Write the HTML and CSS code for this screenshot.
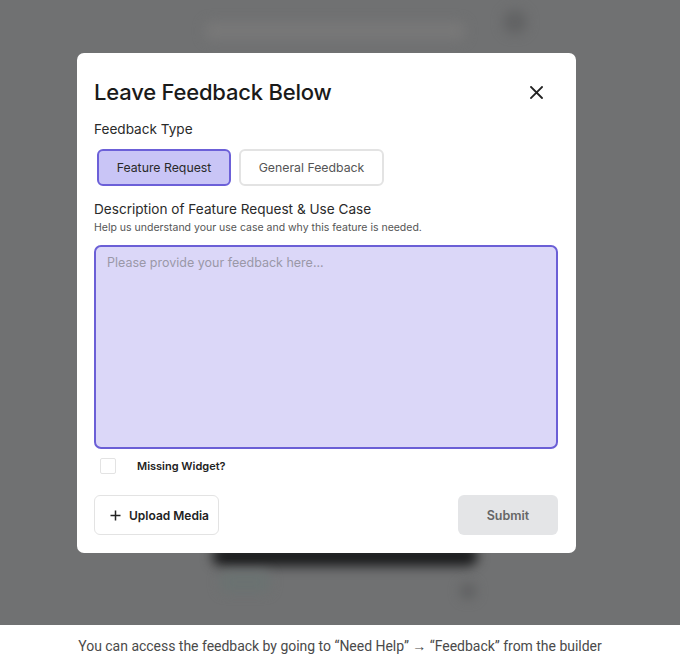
FILE: index.html
```html
<!DOCTYPE html>
<html>
<head>
<meta charset="utf-8">
<link rel="stylesheet" href="styles.css">
</head>
<body>
<div class="stage">
  <div class="blur blur-top"></div>
  <div class="blur blur-dot"></div>
  <div class="blur blur-shadow"></div>
  <div class="blur blur-teal"></div>
  <div class="blur blur-dot2"></div>
  <div class="modal">
    <div class="head">
      <h1 class="title">Leave Feedback Below</h1>
      <svg class="close" width="13" height="13" viewBox="0 0 13 13"><path d="M1 1L12 12M12 1L1 12" stroke="#222" stroke-width="1.8" stroke-linecap="square"/></svg>
    </div>
    <div class="label type-label">Feedback Type</div>
    <div class="types">
      <div class="type active">Feature Request</div>
      <div class="type">General Feedback</div>
    </div>
    <div class="label desc-label">Description of Feature Request &amp; Use Case</div>
    <div class="help">Help us understand your use case and why this feature is needed.</div>
    <div class="textarea"><span class="ph">Please provide your feedback here...</span></div>
    <div class="check-row">
      <span class="box"></span>
      <span class="check-text">Missing Widget?</span>
    </div>
    <div class="actions">
      <div class="upload"><svg width="11" height="11" viewBox="0 0 11 11"><path d="M5.5 0.5V10.5M0.5 5.5H10.5" stroke="#222" stroke-width="1.5"/></svg><span>Upload Media</span></div>
      <div class="submit">Submit</div>
    </div>
  </div>
</div>
<p class="caption">You can access the feedback by going to “Need Help” → “Feedback” from the builder</p>
</body>
</html>
```
FILE: styles.css
```css
* { box-sizing: border-box; }
body { margin: 0; background: #fff; font-family: Inter, "Noto Sans", sans-serif; }
.stage {
  position: relative;
  height: 625px;
  background: #707172;
  padding: 53px 0 0 77px;
  overflow: hidden;
}
.blur { position: absolute; filter: blur(6px); }
.blur-top { left: 205px; top: 22px; width: 260px; height: 18px; background: #787878; border-radius: 6px; }
.blur-dot { left: 503px; top: 10px; width: 24px; height: 24px; background: #626364; border-radius: 50%; }
.blur-shadow { left: 212px; top: 546px; width: 266px; height: 20px; background: #1a1b1c; border-radius: 10px; filter: blur(6px); }
.blur-teal { left: 220px; top: 572px; width: 50px; height: 20px; background: #6a7271; border-radius: 6px; }
.blur-dot2 { left: 460px; top: 583px; width: 16px; height: 16px; background: #5f6061; border-radius: 50%; }
.modal {
  position: relative;
  width: 499px;
  height: 500px;
  background: #fff;
  border-radius: 7px;
  padding: 24px 18px 18px 17px;
  display: flex;
  flex-direction: column;
}
.head { display: flex; justify-content: space-between; align-items: center; height: 30px; }
.title { margin: 0; font-size: 22px; font-weight: 500; color: #1a1a1a; letter-spacing: -0.2px; }
.close { margin-right: 15px; }
.label { font-size: 13.6px; color: #2a2a2a; line-height: 18px; }
.type-label { margin-top: 13px; }
.types { display: flex; gap: 8px; margin-top: 11px; padding-left: 3px; }
.type {
  height: 37px;
  border: 2px solid #e3e3e3;
  border-radius: 6px;
  display: flex; align-items: center; justify-content: center;
  font-size: 12.3px; color: #555;
  width: 145px;
}
.type.active { width: 134px; background: #c9c5f6; border-color: #6c60d8; color: #2a2a2a; }
.desc-label { margin-top: 14px; }
.help { font-size: 10.5px; color: #555; margin-top: 3px; line-height: 13px; }
.textarea {
  margin-top: 11px;
  height: 204px;
  background: #dbd7f8;
  border: 2px solid #6b5fd6;
  border-radius: 7px;
  padding: 4px 11px;
}
.ph { font-size: 12.5px; color: #9a98a8; }
.check-row { display: flex; align-items: center; height: 18px; margin-top: 8px; padding-left: 6px; }
.box { width: 16px; height: 16px; border: 1.5px solid #e3e3e3; border-radius: 2px; }
.check-text { margin-left: 21px; font-size: 11px; font-weight: 600; color: #222; }
.actions { display: flex; justify-content: space-between; margin-top: auto; }
.upload {
  width: 125px; height: 40px;
  border: 1px solid #e3e3e3; border-radius: 6px;
  display: flex; align-items: center; gap: 8px; padding-left: 15px;
  font-size: 12px; font-weight: 600; color: #222;
}
.submit {
  width: 100px; height: 40px;
  background: #e4e5e7; border-radius: 6px;
  display: flex; align-items: center; justify-content: center;
  font-size: 12.5px; font-weight: 600; color: #666;
}
.caption {
  margin: 13px 0 0;
  text-align: center;
  font-family: Roboto, sans-serif;
  font-size: 14px;
  color: #4a4a4a;
  letter-spacing: -0.02px;
}
```
